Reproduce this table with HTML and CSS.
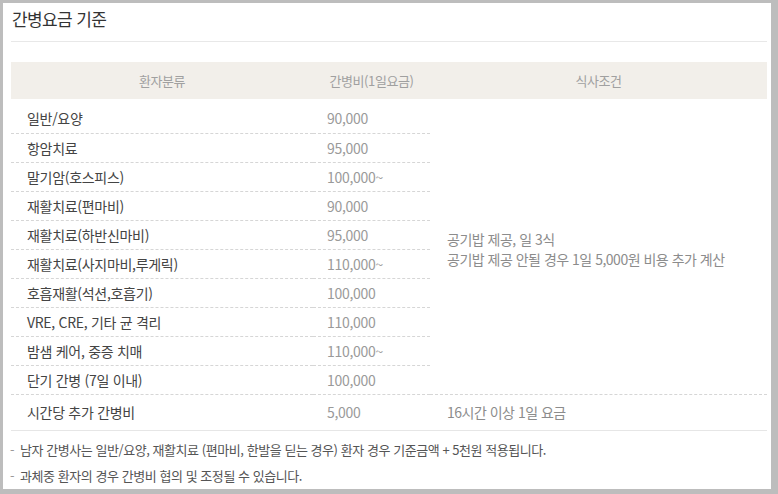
FILE: index.html
```html
<!DOCTYPE html>
<html lang="ko">
<head>
<meta charset="utf-8">
<title>간병요금 기준</title>
<link rel="stylesheet" href="styles.css">
</head>
<body>
<div class="panel">
  <h1 class="title">간병요금 기준</h1>
  <table class="fee">
    <colgroup>
      <col class="c1"><col class="c2"><col class="c3">
    </colgroup>
    <thead>
      <tr><th>환자분류</th><th>간병비(1일요금)</th><th>식사조건</th></tr>
    </thead>
    <tbody>
      <tr class="first"><td class="name">일반/요양</td><td class="num">90,000</td>
        <td class="meal" rowspan="10">공기밥 제공, 일 3식<br>공기밥 제공 안될 경우 1일 5,000원 비용 추가 계산</td></tr>
      <tr><td class="name">항암치료</td><td class="num">95,000</td></tr>
      <tr><td class="name">말기암(호스피스)</td><td class="num">100,000~</td></tr>
      <tr><td class="name">재활치료(편마비)</td><td class="num">90,000</td></tr>
      <tr><td class="name">재활치료(하반신마비)</td><td class="num">95,000</td></tr>
      <tr><td class="name">재활치료(사지마비,루게릭)</td><td class="num">110,000~</td></tr>
      <tr><td class="name">호흡재활(석션,호흡기)</td><td class="num">100,000</td></tr>
      <tr><td class="name">VRE, CRE, 기타 균 격리</td><td class="num">110,000</td></tr>
      <tr><td class="name">밤샘 케어, 중증 치매</td><td class="num">110,000~</td></tr>
      <tr><td class="name">단기 간병 (7일 이내)</td><td class="num">100,000</td></tr>
      <tr class="last"><td class="name">시간당 추가 간병비</td><td class="num">5,000</td><td class="meal">16시간 이상 1일 요금</td></tr>
    </tbody>
  </table>
  <ul class="notes">
    <li><span class="dash">-</span>남자 간병사는 일반/요양, 재활치료 (편마비, 한발을 딛는 경우) 환자 경우 기준금액 + 5천원 적용됩니다.</li>
    <li><span class="dash">-</span>과체중 환자의 경우 간병비 협의 및 조정될 수 있습니다.</li>
  </ul>
</div>
</body>
</html>
```
FILE: styles.css
```css
* { box-sizing: border-box; }
html, body { margin: 0; padding: 0; }
body {
  background: #bdbdbd;
  width: 778px;
  height: 494px;
  padding: 3px 7px 5px 3px;
  font-family: "Noto Sans CJK KR", "Noto Sans", sans-serif;
  overflow: hidden;
}
.panel {
  background: #fff;
  height: 486px;
  padding: 0 4px 0 8px;
}
.title {
  margin: 0 0 20px 0;
  padding: 5px 0 0 1px;
  height: 39px;
  font-size: 17px;
  font-weight: 400;
  color: #333;
  letter-spacing: -0.6px;
  line-height: 22px;
  border-bottom: 1px solid #e8e8e8;
}
.fee {
  width: 756px;
  border-collapse: collapse;
  table-layout: fixed;
  font-size: 14px;
  letter-spacing: -0.3px;
}
.c1 { width: 302px; }
.c2 { width: 117px; }
.c3 { width: 337px; }
.fee th {
  background: #f2efea;
  color: #a0a0a0;
  font-weight: 400;
  font-size: 13px;
  letter-spacing: -0.4px;
  height: 37px;
  padding: 0;
  text-align: center;
  line-height: 18px;
}
.fee td {
  padding: 5px 0 5px 16px;
  line-height: 18px;
  height: 29px;
  border-bottom: 1px dashed #d6d6d6;
  vertical-align: middle;
}
.fee tr.first td { padding-top: 10px; height: 34px; }
.fee tr.last td { padding-top: 7px; padding-bottom: 8px; height: 35px; border-bottom: 1px solid #e6e6e6; }
.fee td.name { color: #444; }
.fee td.num { color: #9a9a9a; padding-left: 14px; }
.fee td.meal { color: #8c8c8c; padding-left: 17px; line-height: 20px; letter-spacing: -0.5px; }
.fee tr.first td.meal { padding-top: 10px; padding-bottom: 5px; }
.notes {
  list-style: none;
  margin: 0;
  padding: 6px 0 0 0;
  font-size: 13px;
  letter-spacing: -0.45px;
  color: #555;
}
.notes li {
  line-height: 26px;
  height: 26px;
}
.dash {
  color: #999;
  margin: 0 6px 0 -1px;
}
```
